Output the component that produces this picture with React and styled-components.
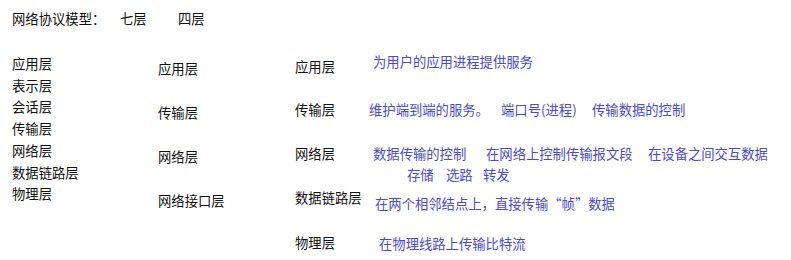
import React from "react";
import styled, { createGlobalStyle } from "styled-components";

const GlobalStyle = createGlobalStyle`
  html, body {
    margin: 0;
    padding: 0;
    background: #ffffff;
  }
  body {
    font-family: "Microsoft YaHei", "Noto Sans CJK SC", "Noto Sans", sans-serif;
    font-size: 13.33px;
    color: #111111;
  }
`;

const Page = styled.div`
  width: 791px;
  height: 260px;
  padding: 9px 0 0 12px;
  box-sizing: border-box;
  overflow: hidden;
`;

const Header = styled.div`
  display: flex;
  line-height: 20px;
`;

const Cell = styled.span`
  display: inline-block;
  width: ${({ w }) => (w ? `${w}px` : "auto")};
  white-space: nowrap;
`;

const Body = styled.div`
  display: flex;
  margin-top: 24px;
`;

const SevenCol = styled.div`
  display: flex;
  flex-direction: column;
  width: 146px;
  line-height: 21.7px;
`;

const FourCol = styled.div`
  display: flex;
  flex-direction: column;
  gap: 24px;
  width: 137px;
  padding-top: 6px;
  line-height: 20px;
`;

const DetailCol = styled.div`
  display: flex;
  flex-direction: column;
`;

const Row = styled.div`
  display: flex;
  align-items: flex-start;
  height: 44px;
`;

const Label = styled.div`
  line-height: 20px;
  margin-top: ${({ dy }) => dy}px;
  white-space: nowrap;
`;

const Desc = styled.div`
  position: relative;
  left: 0;
  margin-top: ${({ dy }) => dy}px;
  margin-left: ${({ dx }) => dx}px;
  color: #4a4ad8;
  line-height: 21.5px;
  white-space: nowrap;
`;

const Line = styled.div`
  display: flex;
  padding-left: ${({ indent }) => indent || 0}px;
`;

const seven = ["应用层", "表示层", "会话层", "传输层", "网络层", "数据链路层", "物理层"];
const four = ["应用层", "传输层", "网络层", "网络接口层"];

const details = [
  { label: "应用层", ly: 4, dy: -2, dx: 78 - 39.99, lines: [[["为用户的应用进程提供服务"]]] },
  {
    label: "传输层", ly: 3, dy: 2, dx: 74 - 39.99,
    lines: [[["维护端到端的服务。", 132], ["端口号(进程)", 91], ["传输数据的控制"]]],
  },
  {
    label: "网络层", ly: 3, dy: 1.5, dx: 78 - 39.99,
    lines: [
      [["数据传输的控制", 113], ["在网络上控制传输报文段", 162], ["在设备之间交互数据"]],
      [["存储", 39], ["选路", 37], ["转发"]],
    ],
  },
  { label: "数据链路层", ly: 3, dy: 7.5, dx: 80 - 66.65, lines: [[["在两个相邻结点上，直接传输“帧”数据"]]] },
  { label: "物理层", ly: 4, dy: 3.5, dx: 84 - 39.99, lines: [[["在物理线路上传输比特流"]]] },
];

export default function App() {
  return (
    <>
      <GlobalStyle />
      <Page>
        <Header>
          <Cell w={108}>网络协议模型：</Cell>
          <Cell w={58}>七层</Cell>
          <Cell>四层</Cell>
        </Header>
        <Body>
          <SevenCol>
            {seven.map((s) => (
              <div key={s}>{s}</div>
            ))}
          </SevenCol>
          <FourCol>
            {four.map((s) => (
              <div key={s}>{s}</div>
            ))}
          </FourCol>
          <DetailCol>
            {details.map((d) => (
              <Row key={d.label}>
                <Label dy={d.ly}>{d.label}</Label>
                <Desc dy={d.dy} dx={d.dx}>
                  {d.lines.map((line, i) => (
                    <Line key={i} indent={i === 1 ? 34 : 0}>
                      {line.map(([t, w]) => (
                        <Cell key={t} w={w}>{t}</Cell>
                      ))}
                    </Line>
                  ))}
                </Desc>
              </Row>
            ))}
          </DetailCol>
        </Body>
      </Page>
    </>
  );
}
